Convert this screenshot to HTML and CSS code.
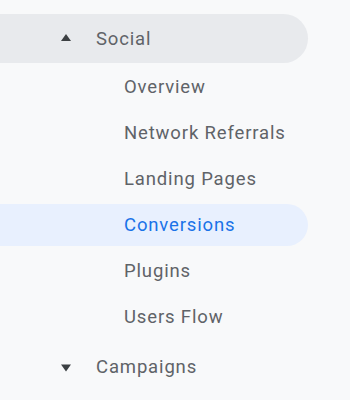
FILE: index.html
```html
<!DOCTYPE html>
<html lang="en">
<head>
    <meta charset="UTF-8">
    <meta name="viewport" content="width=device-width, initial-scale=1.0">
    <title>Reports</title>
    <link rel="stylesheet" href="styles.css">
</head>
<body>
    <nav class="nav">
        <div class="group open">
            <svg class="arrow" width="10" height="10" viewBox="0 0 10 10"><polygon points="0,7 5,0 10,7"/></svg>
            <span class="group-label">Social</span>
        </div>
        <ul class="items">
            <li class="item">Overview</li>
            <li class="item">Network Referrals</li>
            <li class="item">Landing Pages</li>
            <li class="item active">Conversions</li>
            <li class="item">Plugins</li>
            <li class="item">Users Flow</li>
        </ul>
        <div class="group">
            <svg class="arrow" width="10" height="10" viewBox="0 0 10 10"><polygon points="0,2.5 10,2.5 5,9.5"/></svg>
            <span class="group-label">Campaigns</span>
        </div>
    </nav>
</body>
</html>
```

FILE: styles.css
```css
* {
    margin: 0;
    padding: 0;
    box-sizing: border-box;
}
body {
    background: #f8f9fa;
    font-family: Roboto, "Liberation Sans", sans-serif;
    color: #5f6368;
    padding-top: 14px;
    width: 350px;
    height: 400px;
    overflow: hidden;
}
.nav {
    width: 308px;
    display: flex;
    flex-direction: column;
}
.group {
    display: flex;
    align-items: center;
    height: 49px;
    padding-left: 61px;
    border-radius: 0 25px 25px 0;
    font-size: 18.5px;
    letter-spacing: 0.85px;
}
.group.open {
    background: #e8eaed;
}
.arrow {
    margin-right: 25px;
    fill: #3c4043;
}
.items {
    list-style: none;
    display: flex;
    flex-direction: column;
    gap: 4px;
    margin: 3px 0 4px;
}
.item {
    display: flex;
    align-items: center;
    height: 42px;
    padding-left: 124px;
    font-size: 18.5px;
    letter-spacing: 0.85px;
    border-radius: 0 21px 21px 0;
}
.item.active {
    background: #e8f0fe;
    color: #1a73e8;
}
```
